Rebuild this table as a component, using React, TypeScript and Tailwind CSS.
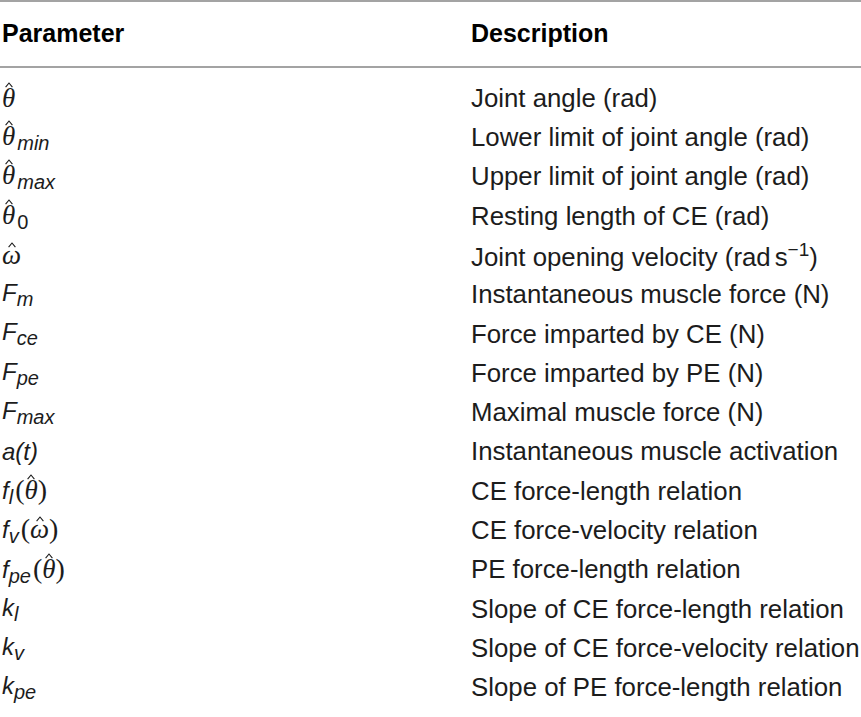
import React from "react";

const serif = "font-['Liberation_Serif','DejaVu_Serif',serif]";

function Hat({ children, low }: { children: React.ReactNode; low?: boolean }) {
  return (
    <span className="relative inline-block">
      {children}
      <svg
        className={`absolute left-1/2 -translate-x-1/2 ${low ? "top-[0px]" : "top-[-3px]"}`}
        width="8"
        height="6"
        viewBox="0 0 8 6"
        fill="none"
        stroke="currentColor"
        strokeWidth="1.1"
      >
        <path d="M0.6 5.2 L4 1 L7.4 5.2" />
      </svg>
    </span>
  );
}

function Theta() {
  return (
    <span className={`${serif} italic text-[27px]`}>
      <Hat>θ</Hat>
    </span>
  );
}

function Omega() {
  return (
    <span className={`${serif} italic text-[27px]`}>
      <Hat low>ω</Hat>
    </span>
  );
}

function Sub({ children }: { children: React.ReactNode }) {
  return <span className="align-[-5px] text-[20px] italic">{children}</span>;
}

function Paren({ children }: { children: React.ReactNode }) {
  return (
    <span className={`${serif} text-[28px] not-italic ml-[2px]`}>
      ({children})
    </span>
  );
}

const rows: { p: React.ReactNode; d: React.ReactNode }[] = [
  { p: <Theta />, d: "Joint angle (rad)" },
  { p: <><Theta /><span className="ml-[2px]"><Sub>min</Sub></span></>, d: "Lower limit of joint angle (rad)" },
  { p: <><Theta /><span className="ml-[2px]"><Sub>max</Sub></span></>, d: "Upper limit of joint angle (rad)" },
  { p: <><Theta /><span className="ml-[2px] align-[-5px] text-[20px]">0</span></>, d: "Resting length of CE (rad)" },
  {
    p: <Omega />,
    d: (
      <>
        Joint opening velocity (rad<span className="ml-[4px]">s</span>
        <span className="align-[10px] text-[19px]">−1</span>)
      </>
    ),
  },
  { p: <><span className="italic">F</span><Sub>m</Sub></>, d: "Instantaneous muscle force (N)" },
  { p: <><span className="italic">F</span><Sub>ce</Sub></>, d: "Force imparted by CE (N)" },
  { p: <><span className="italic">F</span><Sub>pe</Sub></>, d: "Force imparted by PE (N)" },
  { p: <><span className="italic">F</span><Sub>max</Sub></>, d: "Maximal muscle force (N)" },
  { p: <span className="italic">a(t)</span>, d: "Instantaneous muscle activation" },
  { p: <><span className="italic">f</span><Sub>l</Sub><Paren><Theta /></Paren></>, d: "CE force-length relation" },
  { p: <><span className="italic">f</span><Sub>v</Sub><Paren><Omega /></Paren></>, d: "CE force-velocity relation" },
  { p: <><span className="italic">f</span><Sub>pe</Sub><Paren><Theta /></Paren></>, d: "PE force-length relation" },
  { p: <><span className="italic">k</span><Sub>l</Sub></>, d: "Slope of CE force-length relation" },
  { p: <><span className="italic">k</span><Sub>v</Sub></>, d: "Slope of CE force-velocity relation" },
  { p: <><span className="italic">k</span><Sub>pe</Sub></>, d: "Slope of PE force-length relation" },
];

export default function App() {
  return (
    <div className="w-[861px] h-[717px] bg-white overflow-hidden font-['Liberation_Sans',Arial,sans-serif] text-[#1c1c1c]">
      <div className="border-t-2 border-[#a3a3a3]">
        <div className="grid grid-cols-[471px_1fr] h-[66px] items-center border-b-2 border-[#a3a3a3] text-[25px] font-bold text-black">
          <div className="pl-[2px]">Parameter</div>
          <div>Description</div>
        </div>
        <div className="pt-[11px]">
          {rows.map((r, i) => (
            <div key={i} className="grid grid-cols-[471px_1fr] h-[39.3px] items-center text-[24px] leading-none">
              <div className="pl-[2px] whitespace-nowrap">{r.p}</div>
              <div className="whitespace-nowrap text-[25.8px]">{r.d}</div>
            </div>
          ))}
        </div>
      </div>
    </div>
  );
}
